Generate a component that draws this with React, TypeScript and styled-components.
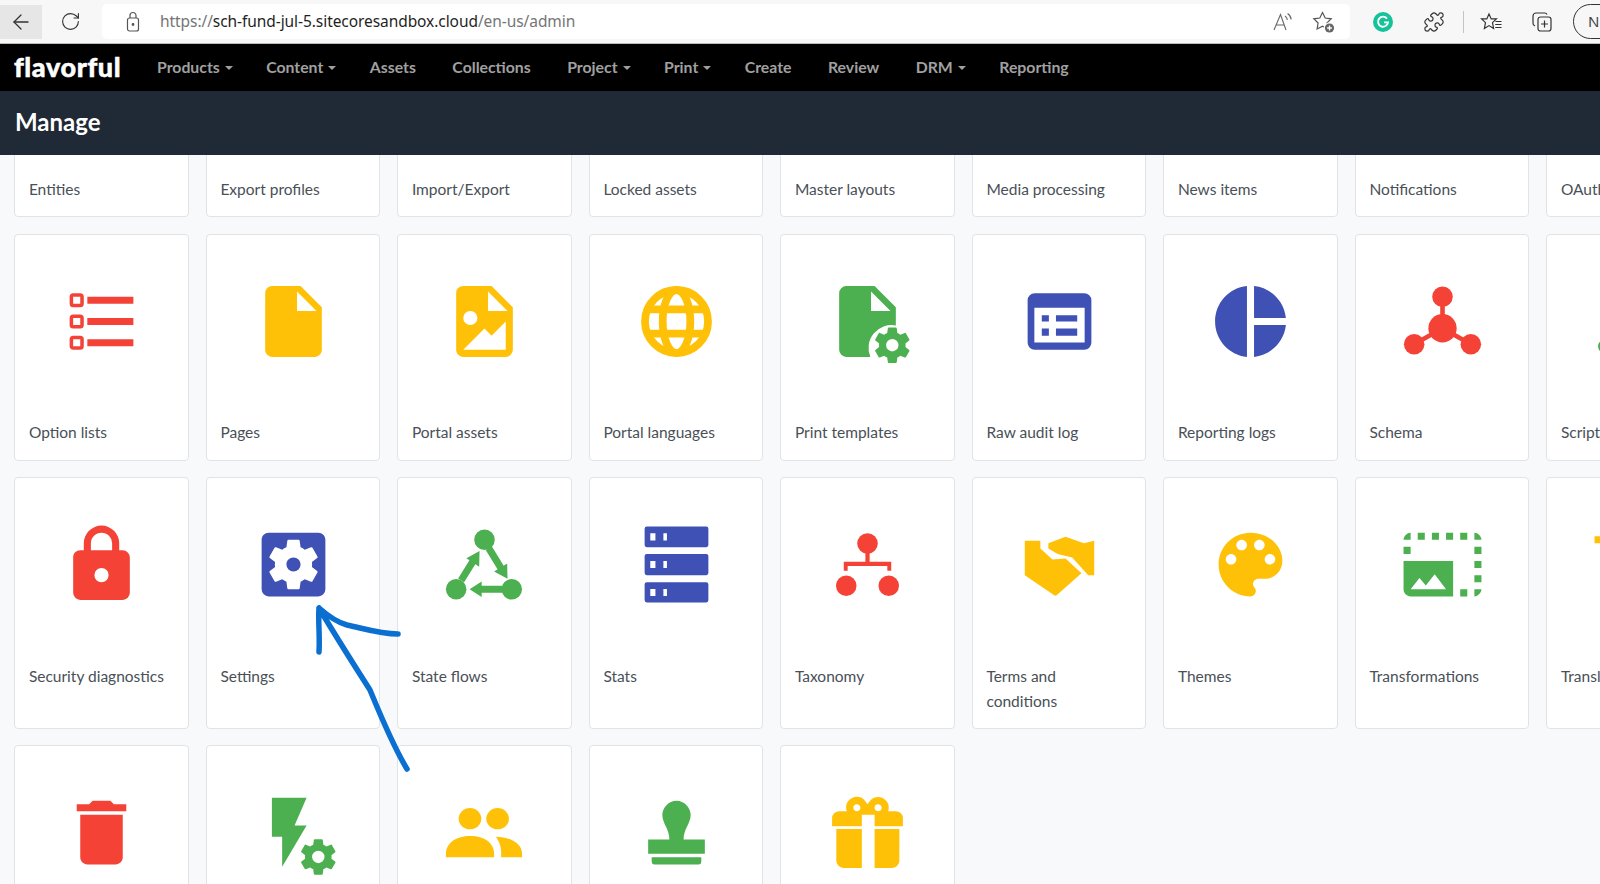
import React from "react";
import styled, { createGlobalStyle } from "styled-components";
import { ArrowLeft, RotateCw, Puzzle } from "lucide-react";
import { MdDelete, MdInsertDriveFile, MdPhotoSizeSelectLarge } from "react-icons/md";

const RED = "#f44336";
const YELLOW = "#ffc107";
const BLUE = "#3f51b5";
const GREEN = "#4caf50";

const GlobalStyle = createGlobalStyle`
  html, body {
    margin: 0;
    padding: 0;
    height: 100%;
    overflow: hidden;
    background: #f8f9fb;
  }
  * {
    box-sizing: border-box;
  }
`;

const Page = styled.div`
  position: relative;
  display: flex;
  flex-direction: column;
  height: 100vh;
  overflow: hidden;
  font-family: "Lato", "Liberation Sans", sans-serif;
`;

/* browser chrome */
const BrowserBar = styled.div`
  display: flex;
  align-items: center;
  flex: none;
  height: 44px;
  background: #f7f7f7;
  border-bottom: 1px solid #bdbdbd;
  color: #333;
  overflow: hidden;
`;

const ToolButton = styled.div<{ $w: number; $active?: boolean }>`
  display: flex;
  flex: none;
  align-items: center;
  justify-content: center;
  width: ${(p) => p.$w}px;
  height: 34px;
  background: ${(p) => (p.$active ? "#e6e6e6" : "transparent")};
`;

const AddressBar = styled.div`
  display: flex;
  flex: none;
  align-items: center;
  width: 1248px;
  height: 35px;
  margin-left: 4px;
  padding: 0 14px 0 20px;
  background: #fff;
  border-radius: 5px;
`;

const UrlText = styled.div`
  margin-left: 16px;
  padding-bottom: 2px;
  font-family: "Noto Sans", "Liberation Sans", sans-serif;
  font-size: 15.5px;
  letter-spacing: -0.07px;
  color: #757575;
  white-space: nowrap;
`;

const UrlHost = styled.span`
  color: #1f1f1f;
`;

const AddressIcons = styled.div`
  display: flex;
  align-items: center;
  gap: 17px;
  margin-left: auto;
`;

const ToolDivider = styled.div`
  width: 1px;
  height: 22px;
  background: #c4c4c4;
`;

const ProfilePill = styled.div`
  flex: none;
  width: 60px;
  height: 35px;
  padding-left: 14px;
  border: 1px solid #333;
  border-radius: 18px;
  font-family: "Noto Sans", sans-serif;
  font-size: 15px;
  line-height: 33px;
  color: #444;
`;

/* app header */
const NavBar = styled.div`
  display: flex;
  align-items: center;
  flex: none;
  height: 47px;
  padding: 0 0 2px 14px;
  background: #000;
`;

const Logo = styled.div`
  width: 125px;
  font-size: 27px;
  font-weight: 900;
  letter-spacing: 0.6px;
  color: #fff;
  -webkit-text-stroke: 0.5px #fff;
`;

const NavList = styled.div`
  display: flex;
  gap: 36.5px;
  margin-left: 18px;
`;

const NavItem = styled.div`
  display: flex;
  align-items: center;
  gap: 5px;
  font-size: 15.8px;
  font-weight: 700;
  color: #a0a0a0;
  white-space: nowrap;
`;

const Caret = styled.span`
  width: 0;
  height: 0;
  margin: 2px -3px 0 0;
  border-top: 4px solid #a0a0a0;
  border-left: 4px solid transparent;
  border-right: 4px solid transparent;
`;

const TitleBar = styled.div`
  display: flex;
  align-items: center;
  flex: none;
  height: 64px;
  padding: 0 0 3px 15px;
  background: #202936;
`;

const Title = styled.h1`
  margin: 0;
  font-size: 24px;
  font-weight: 700;
  color: #fff;
`;

/* tile grid, scrolled so only the bottom of the first row shows */
const Main = styled.div`
  flex: 1;
  min-height: 0;
  overflow: hidden;
`;

const Grid = styled.div`
  display: grid;
  grid-template-columns: repeat(9, 174.5px);
  gap: 16.5px 17px;
  margin-top: -165px;
  padding-left: 14.3px;
`;

const Card = styled.div`
  display: flex;
  flex-direction: column;
  align-items: stretch;
  min-height: 227px;
  padding: 44px 13.3px 14.2px 13.6px;
  background: #fff;
  border: 1px solid #e1e3e7;
  border-radius: 4px;
`;

const IconSlot = styled.div<{ $color: string }>`
  display: flex;
  flex: none;
  align-items: center;
  justify-content: center;
  height: 85px;
  color: ${(p) => p.$color};

  svg {
    width: 85px;
    height: 85px;
    fill: currentColor;
    overflow: visible;
  }
`;

const Label = styled.div<{ $narrow?: boolean }>`
  margin-top: 56.8px;
  max-width: ${(p) => (p.$narrow ? "110px" : "none")};
  font-size: 15.5px;
  line-height: 25px;
  color: #495057;
`;

const Annotation = styled.svg`
  position: absolute;
  inset: 0;
  width: 100%;
  height: 100%;
  pointer-events: none;
`;

const Svg = ({ children }: { children: React.ReactNode }) => <svg viewBox="0 0 24 24">{children}</svg>;

const GEAR =
  "M12,15.5A3.5,3.5 0 0,1 8.5,12A3.5,3.5 0 0,1 12,8.5A3.5,3.5 0 0,1 15.5,12A3.5,3.5 0 0,1 12,15.5M19.43,12.97C19.47,12.65 19.5,12.33 19.5,12C19.5,11.67 19.47,11.34 19.43,11L21.54,9.37C21.73,9.22 21.78,8.95 21.66,8.73L19.66,5.27C19.54,5.05 19.27,4.96 19.05,5.05L16.56,6.05C16.04,5.66 15.5,5.32 14.87,5.07L14.5,2.42C14.46,2.18 14.25,2 14,2H10C9.75,2 9.54,2.18 9.5,2.42L9.13,5.07C8.5,5.32 7.96,5.66 7.44,6.05L4.95,5.05C4.73,4.96 4.46,5.05 4.34,5.27L2.34,8.73C2.21,8.95 2.27,9.22 2.46,9.37L4.57,11C4.53,11.34 4.5,11.67 4.5,12C4.5,12.33 4.53,12.65 4.57,12.97L2.46,14.63C2.27,14.78 2.21,15.05 2.34,15.27L4.34,18.73C4.46,18.95 4.73,19.03 4.95,18.95L7.44,17.94C7.96,18.34 8.5,18.68 9.13,18.93L9.5,21.58C9.54,21.82 9.75,22 10,22H14C14.25,22 14.46,21.82 14.5,21.58L14.87,18.93C15.5,18.67 16.04,18.34 16.56,17.94L19.05,18.95C19.27,19.03 19.54,18.95 19.66,18.73L21.66,15.27C21.78,15.05 21.73,14.78 21.54,14.63L19.43,12.97Z";

const OptionListsIcon = () => (
  <Svg>
    <path d="M21,19V17H8V19H21M21,13V11H8V13H21M8,7H21V5H8V7M4,5V7H6V5H4M3,5A1,1 0 0,1 4,4H6A1,1 0 0,1 7,5V7A1,1 0 0,1 6,8H4A1,1 0 0,1 3,7V5M4,11V13H6V11H4M3,11A1,1 0 0,1 4,10H6A1,1 0 0,1 7,11V13A1,1 0 0,1 6,14H4A1,1 0 0,1 3,13V11M4,17V19H6V17H4M3,17A1,1 0 0,1 4,16H6A1,1 0 0,1 7,17V19A1,1 0 0,1 6,20H4C3.45,20 3,19.55 3,19V17Z" />
  </Svg>
);

const PortalAssetsIcon = () => (
  <Svg>
    <path d="M13,9H18.5L13,3.5V9M6,2H14L20,8V20A2,2 0 0,1 18,22H6C4.89,22 4,21.1 4,20V4C4,2.89 4.89,2 6,2M6,20H15L18,20V12L14,16L12,14L6,20M8,9A2,2 0 0,0 6,11A2,2 0 0,0 8,13A2,2 0 0,0 10,11A2,2 0 0,0 8,9Z" />
  </Svg>
);

const GlobeIcon = () => (
  <Svg>
    <g fill="none" stroke="currentColor" strokeWidth="2.2">
      <circle cx="12" cy="12" r="8.9" />
      <ellipse cx="12" cy="12" rx="3.9" ry="8.9" />
      <path d="M3.6 8.6H20.4M3.6 15.4H20.4" />
    </g>
  </Svg>
);

const PrintTemplatesIcon = () => (
  <Svg>
    <path d="M6,2H14L20,8V13.1A6.5,6.5 0 0,0 12.8,22H6A2,2 0 0,1 4,20V4A2,2 0 0,1 6,2M13,9H18.5L13,3.5V9Z" />
    <path transform="translate(13 12.7) scale(.5)" d={GEAR} />
  </Svg>
);

const AuditLogIcon = () => (
  <Svg>
    <path
      fillRule="evenodd"
      d="M5 4H19A2 2 0 0 1 21 6V18A2 2 0 0 1 19 20H5A2 2 0 0 1 3 18V6A2 2 0 0 1 5 4ZM4.9 8.1V17.9H19.1V8.1ZM7 10.2H9V12H7ZM11 10.2H17V12H11ZM7 14H9V16H7ZM11 14H17V16H11Z"
    />
  </Svg>
);

const ReportingIcon = () => (
  <Svg>
    <path d="M11,2V22C5.9,21.5 2,17.2 2,12C2,6.8 5.9,2.5 11,2M13,2V11H22C21.5,6.2 17.8,2.5 13,2M13,13V22C17.7,21.5 21.5,17.8 22,13H13Z" />
  </Svg>
);

const SchemaIcon = () => (
  <Svg>
    <path d="M12 5V13.9L4 18.4M12 13.9L20 18.4" fill="none" stroke="currentColor" strokeWidth="1.3" />
    <circle cx="12" cy="5" r="2.9" />
    <circle cx="12" cy="13.9" r="4" />
    <circle cx="4" cy="18.4" r="2.9" />
    <circle cx="20" cy="18.4" r="2.9" />
  </Svg>
);

const ScriptIcon = () => (
  <Svg>
    <circle cx="4" cy="19" r="2" />
    <circle cx="12" cy="12" r="5" />
  </Svg>
);

const LockIcon = () => (
  <Svg>
    <path d="M12,17A2,2 0 0,0 14,15C14,13.89 13.1,13 12,13A2,2 0 0,0 10,15A2,2 0 0,0 12,17M18,8A2,2 0 0,1 20,10V20A2,2 0 0,1 18,22H6A2,2 0 0,1 4,20V10C4,8.89 4.9,8 6,8H7V6A5,5 0 0,1 12,1A5,5 0 0,1 17,6V8H18M12,3A3,3 0 0,0 9,6V8H15V6A3,3 0 0,0 12,3Z" />
  </Svg>
);

const SettingsIcon = () => (
  <Svg>
    <path d="M17.25,12C17.25,12.23 17.23,12.46 17.2,12.68L18.68,13.84C18.81,13.95 18.85,14.13 18.76,14.29L17.36,16.71C17.27,16.86 17.09,16.92 16.93,16.86L15.19,16.16C14.83,16.44 14.43,16.67 14,16.85L13.75,18.7C13.72,18.87 13.57,19 13.4,19H10.6C10.43,19 10.28,18.87 10.25,18.7L10,16.85C9.56,16.67 9.17,16.44 8.81,16.16L7.07,16.86C6.91,16.92 6.73,16.86 6.64,16.71L5.24,14.29C5.15,14.13 5.19,13.95 5.32,13.84L6.8,12.68C6.77,12.46 6.75,12.23 6.75,12C6.75,11.77 6.77,11.54 6.8,11.32L5.32,10.16C5.19,10.05 5.15,9.86 5.24,9.71L6.64,7.29C6.73,7.13 6.91,7.07 7.07,7.14L8.81,7.84C9.17,7.56 9.56,7.32 10,7.15L10.25,5.29C10.28,5.13 10.43,5 10.6,5H13.4C13.57,5 13.72,5.13 13.75,5.29L14,7.15C14.43,7.32 14.83,7.56 15.19,7.84L16.93,7.14C17.09,7.07 17.27,7.13 17.36,7.29L18.76,9.71C18.85,9.86 18.81,10.05 18.68,10.16L17.2,11.32C17.23,11.54 17.25,11.77 17.25,12M19,3H5C3.89,3 3,3.89 3,5V19A2,2 0 0,0 5,21H19A2,2 0 0,0 21,19V5C21,3.89 20.1,3 19,3M12,10C10.89,10 10,10.89 10,12A2,2 0 0,0 12,14A2,2 0 0,0 14,12C14,10.89 13.1,10 12,10Z" />
  </Svg>
);

const StateFlowsIcon = () => (
  <Svg>
    <circle cx="12" cy="5" r="2.9" />
    <circle cx="4" cy="19" r="2.9" />
    <circle cx="19.7" cy="19" r="2.9" />
    <path d="M5.4 16.5L9.3 10.2M13.2 7.4L17 13.6M17 19H10.5" fill="none" stroke="currentColor" strokeWidth="2" />
    <path d="M10.6 8.2L10.5 12.6L6.9 10.2ZM18.5 16L18.4 11.7L14.7 14ZM7.8 19L11.2 16.8V21.2Z" />
  </Svg>
);

const StatsIcon = () => (
  <Svg>
    <path
      fillRule="evenodd"
      d="M3.6 1.3H20.4A.6.6 0 0 1 21 1.9V6.5A.6.6 0 0 1 20.4 7.1H3.6A.6.6 0 0 1 3 6.5V1.9A.6.6 0 0 1 3.6 1.3ZM4.6 3.2V5.2H6.05V3.2ZM8.3 3.2V5.2H9.3V3.2ZM3.6 9H20.4A.6.6 0 0 1 21 9.6V14.4A.6.6 0 0 1 20.4 15H3.6A.6.6 0 0 1 3 14.4V9.6A.6.6 0 0 1 3.6 9ZM4.6 11V13H6.05V11ZM8.3 11V13H9.3V11ZM3.6 17H20.4A.6.6 0 0 1 21 17.6V22.1A.6.6 0 0 1 20.4 22.7H3.6A.6.6 0 0 1 3 22.1V17.6A.6.6 0 0 1 3.6 17ZM4.6 18.9V20.9H6.05V18.9ZM8.3 18.9V20.9H9.3V18.9Z"
    />
  </Svg>
);

const TaxonomyIcon = () => (
  <Svg>
    <circle cx="12" cy="6.1" r="2.9" />
    <circle cx="6" cy="18" r="2.9" />
    <circle cx="18" cy="18" r="2.9" />
    <path d="M11.4 8.5H12.6V11.2H18.7V13.75H17.6V12.4H6.4V13.75H5.3V11.2H11.4Z" />
  </Svg>
);

const HandshakeIcon = () => (
  <Svg>
    <path d="M2.2 5.3H6.6V7.45L10 10.6L13.7 10.3L18.2 14.5L11.5 20.4Q10.8 21.2 10.1 20.4L2.2 15Z" />
    <path d="M8.85 6L13.7 4.15L18.9 6L21.8 5.3V15H20.1L15.6 10L11.5 9L8.85 7.45Z" />
  </Svg>
);

const PaletteIcon = () => (
  <Svg>
    <path d="M12 3C7 3 3 7 3 12S7 21 12 21C12.8 21 13.5 20.3 13.5 19.5C13.5 19.1 13.4 18.8 13.1 18.5C12.9 18.2 12.7 17.9 12.7 17.5C12.7 16.7 13.4 16 14.2 16H16C18.8 16 21 13.8 21 11C21 6.6 17 3 12 3ZM6.5 12C5.7 12 5 11.3 5 10.5S5.7 9 6.5 9 8 9.7 8 10.5 7.3 12 6.5 12ZM9.5 8C8.7 8 8 7.3 8 6.5S8.7 5 9.5 5 11 5.7 11 6.5 10.3 8 9.5 8ZM14.5 8C13.7 8 13 7.3 13 6.5S13.7 5 14.5 5 16 5.7 16 6.5 15.3 8 14.5 8ZM17.5 12C16.7 12 16 11.3 16 10.5S16.7 9 17.5 9 19 9.7 19 10.5 18.3 12 17.5 12Z" />
  </Svg>
);

const TranslationsIcon = () => (
  <Svg>
    <path d="M1 4H15V6H1ZM8 2H10V5H8Z" />
  </Svg>
);

const TriggersIcon = () => (
  <Svg>
    <path d="M5.9 2.2H15.7L12.3 10H15.7L8.8 21.7V13.2H5.9Z" />
    <path transform="translate(13 12.9) scale(.5)" d={GEAR} />
  </Svg>
);

const UsersIcon = () => (
  <Svg>
    <ellipse cx="7.9" cy="8.1" rx="3.2" ry="3" />
    <ellipse cx="15.7" cy="8.1" rx="3.2" ry="3" />
    <path d="M1.1 19V18C1.1 15 4 13 8 13C12 13 14.7 15 14.7 18V19Z" />
    <path d="M15.2 13.2C19 13.2 22.6 15 22.6 18V19H16.7V17.5C16.7 15.7 16 14.3 15.2 13.2Z" />
  </Svg>
);

const StampIcon = () => (
  <Svg>
    <path d="M12 3C14.2 3 16 5 16 7C16 9.5 14 11 14 14H20V18H4V14H10C10 11 8 9.5 8 7C8 5 9.8 3 12 3ZM5 19H19V20.2A.8.8 0 0 1 18.2 21H5.8A.8.8 0 0 1 5 20.2Z" />
  </Svg>
);

const GiftIcon = () => (
  <Svg>
    <path d="M9.06,1.93C7.17,1.92 5.33,3.74 6.17,6H4A2,2 0 0,0 2,8V10.2H10.4V7H14V10.2H22V8A2,2 0 0,0 20,6H17.83C19,2.73 14.6,0.42 12.57,3.24L12,4L11.43,3.22C10.8,2.33 9.93,1.94 9.06,1.93M9,4C9.89,4 10.34,5.08 9.71,5.71C9.08,6.34 8,5.89 8,5A1,1 0 0,1 9,4M15,4C15.89,4 16.34,5.08 15.71,5.71C15.08,6.34 14,5.89 14,5A1,1 0 0,1 15,4M3.2,11V20A2,2 0 0,0 5.2,22H10.4V11H3.2M14,11V22H19A2,2 0 0,0 21,20V11H14Z" />
  </Svg>
);

type Tile = {
  label?: string;
  color?: string;
  icon?: React.ReactNode;
  narrow?: boolean;
};

const tiles: Tile[] = [
  { label: "Entities" },
  { label: "Export profiles" },
  { label: "Import/Export" },
  { label: "Locked assets" },
  { label: "Master layouts" },
  { label: "Media processing" },
  { label: "News items" },
  { label: "Notifications" },
  { label: "OAuth clients" },
  { label: "Option lists", color: RED, icon: <OptionListsIcon /> },
  { label: "Pages", color: YELLOW, icon: <MdInsertDriveFile /> },
  { label: "Portal assets", color: YELLOW, icon: <PortalAssetsIcon /> },
  { label: "Portal languages", color: YELLOW, icon: <GlobeIcon /> },
  { label: "Print templates", color: GREEN, icon: <PrintTemplatesIcon /> },
  { label: "Raw audit log", color: BLUE, icon: <AuditLogIcon /> },
  { label: "Reporting logs", color: BLUE, icon: <ReportingIcon /> },
  { label: "Schema", color: RED, icon: <SchemaIcon /> },
  { label: "Scripts", color: GREEN, icon: <ScriptIcon /> },
  { label: "Security diagnostics", color: RED, icon: <LockIcon /> },
  { label: "Settings", color: BLUE, icon: <SettingsIcon /> },
  { label: "State flows", color: GREEN, icon: <StateFlowsIcon /> },
  { label: "Stats", color: BLUE, icon: <StatsIcon /> },
  { label: "Taxonomy", color: RED, icon: <TaxonomyIcon /> },
  { label: "Terms and conditions", color: YELLOW, icon: <HandshakeIcon />, narrow: true },
  { label: "Themes", color: YELLOW, icon: <PaletteIcon /> },
  { label: "Transformations", color: GREEN, icon: <MdPhotoSizeSelectLarge /> },
  { label: "Translations", color: YELLOW, icon: <TranslationsIcon /> },
  { color: RED, icon: <MdDelete /> },
  { color: GREEN, icon: <TriggersIcon /> },
  { color: YELLOW, icon: <UsersIcon /> },
  { color: GREEN, icon: <StampIcon /> },
  { color: YELLOW, icon: <GiftIcon /> },
];

const navItems = [
  { name: "Products", menu: true },
  { name: "Content", menu: true },
  { name: "Assets" },
  { name: "Collections" },
  { name: "Project", menu: true },
  { name: "Print", menu: true },
  { name: "Create" },
  { name: "Review" },
  { name: "DRM", menu: true },
  { name: "Reporting" },
];

function App() {
  return (
    <Page>
      <GlobalStyle />
      <BrowserBar>
        <ToolButton $w={42} $active>
          <ArrowLeft size={24} strokeWidth={1.3} />
        </ToolButton>
        <ToolButton $w={56}>
          <RotateCw size={21} strokeWidth={1.3} />
        </ToolButton>
        <AddressBar>
          <svg width="22" height="24" viewBox="0 0 22 24" fill="none" stroke="#555" strokeWidth="1.2">
            <rect x="5.5" y="8" width="11" height="13" rx="2" />
            <path d="M8 8V5.5A3 3 0 0 1 14 5.5V8" />
            <circle cx="11" cy="14.5" r="0.8" fill="#555" />
          </svg>
          <UrlText>
            https://<UrlHost>sch-fund-jul-5.sitecoresandbox.cloud</UrlHost>/en-us/admin
          </UrlText>
          <AddressIcons>
            <svg width="24" height="24" viewBox="0 0 24 24" fill="none" stroke="#666" strokeWidth="1.1">
              <path d="M3 20L9.5 4.5L15 20M5.2 15H13" />
              <path d="M14 6C15.4 7 16.2 8.4 16.4 10M16.6 3.5C18.8 5 20 7 20.2 9.4" />
            </svg>
            <svg width="24" height="24" viewBox="0 0 24 24" fill="none" stroke="#555" strokeWidth="1.2">
              <path d="M10.5 2.5L13.2 8L19.2 8.8L14.9 13L15.9 19L10.5 16.2L5.1 19L6.1 13L1.8 8.8L7.8 8Z" />
              <circle cx="17.5" cy="18" r="5.8" fill="#fff" stroke="none" />
              <circle cx="17.5" cy="18" r="4.6" fill="#666" stroke="none" />
              <path d="M17.5 15.6V20.4M15.1 18H19.9" stroke="#fff" strokeWidth="1.3" />
            </svg>
          </AddressIcons>
        </AddressBar>
        <ToolButton $w={66}>
          <svg width="22" height="22" viewBox="0 0 22 22">
            <circle cx="11" cy="11" r="10" fill="#15c39a" />
            <path d="M15 7.6A5 5 0 1 0 16 11.4H12" fill="none" stroke="#fff" strokeWidth="1.9" />
          </svg>
        </ToolButton>
        <ToolButton $w={36}>
          <Puzzle size={22} strokeWidth={1.3} />
        </ToolButton>
        <ToolButton $w={22}>
          <ToolDivider />
        </ToolButton>
        <ToolButton $w={36}>
          <svg width="24" height="24" viewBox="0 0 24 24" fill="none" stroke="#333" strokeWidth="1.2">
            <path d="M9 4L11.2 8.9H16.4L12.5 12.6L13.6 18.5L9 15.6L4.4 18.5L5.5 12.6L1.6 8.9H6.8Z" />
            <path d="M15.5 11.5H21.5M15.2 14.5H21.5M15.2 17.5H21.5" />
          </svg>
        </ToolButton>
        <ToolButton $w={63}>
          <svg width="24" height="24" viewBox="0 0 24 24" fill="none" stroke="#333" strokeWidth="1.2">
            <rect x="8" y="7" width="13" height="14" rx="2.5" />
            <path d="M17 4.5A2.5 2.5 0 0 0 14.5 3H6A3 3 0 0 0 3 6V13A3 3 0 0 0 5 16" />
            <path d="M14.5 10.5V17.5M11 14H18" />
          </svg>
        </ToolButton>
        <ProfilePill>N</ProfilePill>
      </BrowserBar>

      <NavBar>
        <Logo>flavorful</Logo>
        <NavList>
          {navItems.map((item) => (
            <NavItem key={item.name}>
              {item.name}
              {item.menu && <Caret />}
            </NavItem>
          ))}
        </NavList>
      </NavBar>

      <TitleBar>
        <Title>Manage</Title>
      </TitleBar>

      <Main>
        <Grid>
          {tiles.map((tile, i) => (
            <Card key={i}>
              <IconSlot $color={tile.color || "transparent"}>{tile.icon}</IconSlot>
              {tile.label && <Label $narrow={tile.narrow}>{tile.label}</Label>}
            </Card>
          ))}
        </Grid>
      </Main>

      {/* hand drawn arrow pointing at the Settings tile */}
      <Annotation viewBox="0 0 1600 884">
        <path
          d="M319 608C318 622 320 636 319 652M319 608C328 616 336 622 347 625C362 628 380 634 398 634M319 608C338 640 356 668 370 690C380 714 392 744 407 769"
          fill="none"
          stroke="#0a6fd0"
          strokeWidth="5.5"
          strokeLinecap="round"
          strokeLinejoin="round"
        />
      </Annotation>
    </Page>
  );
}

export default App;
